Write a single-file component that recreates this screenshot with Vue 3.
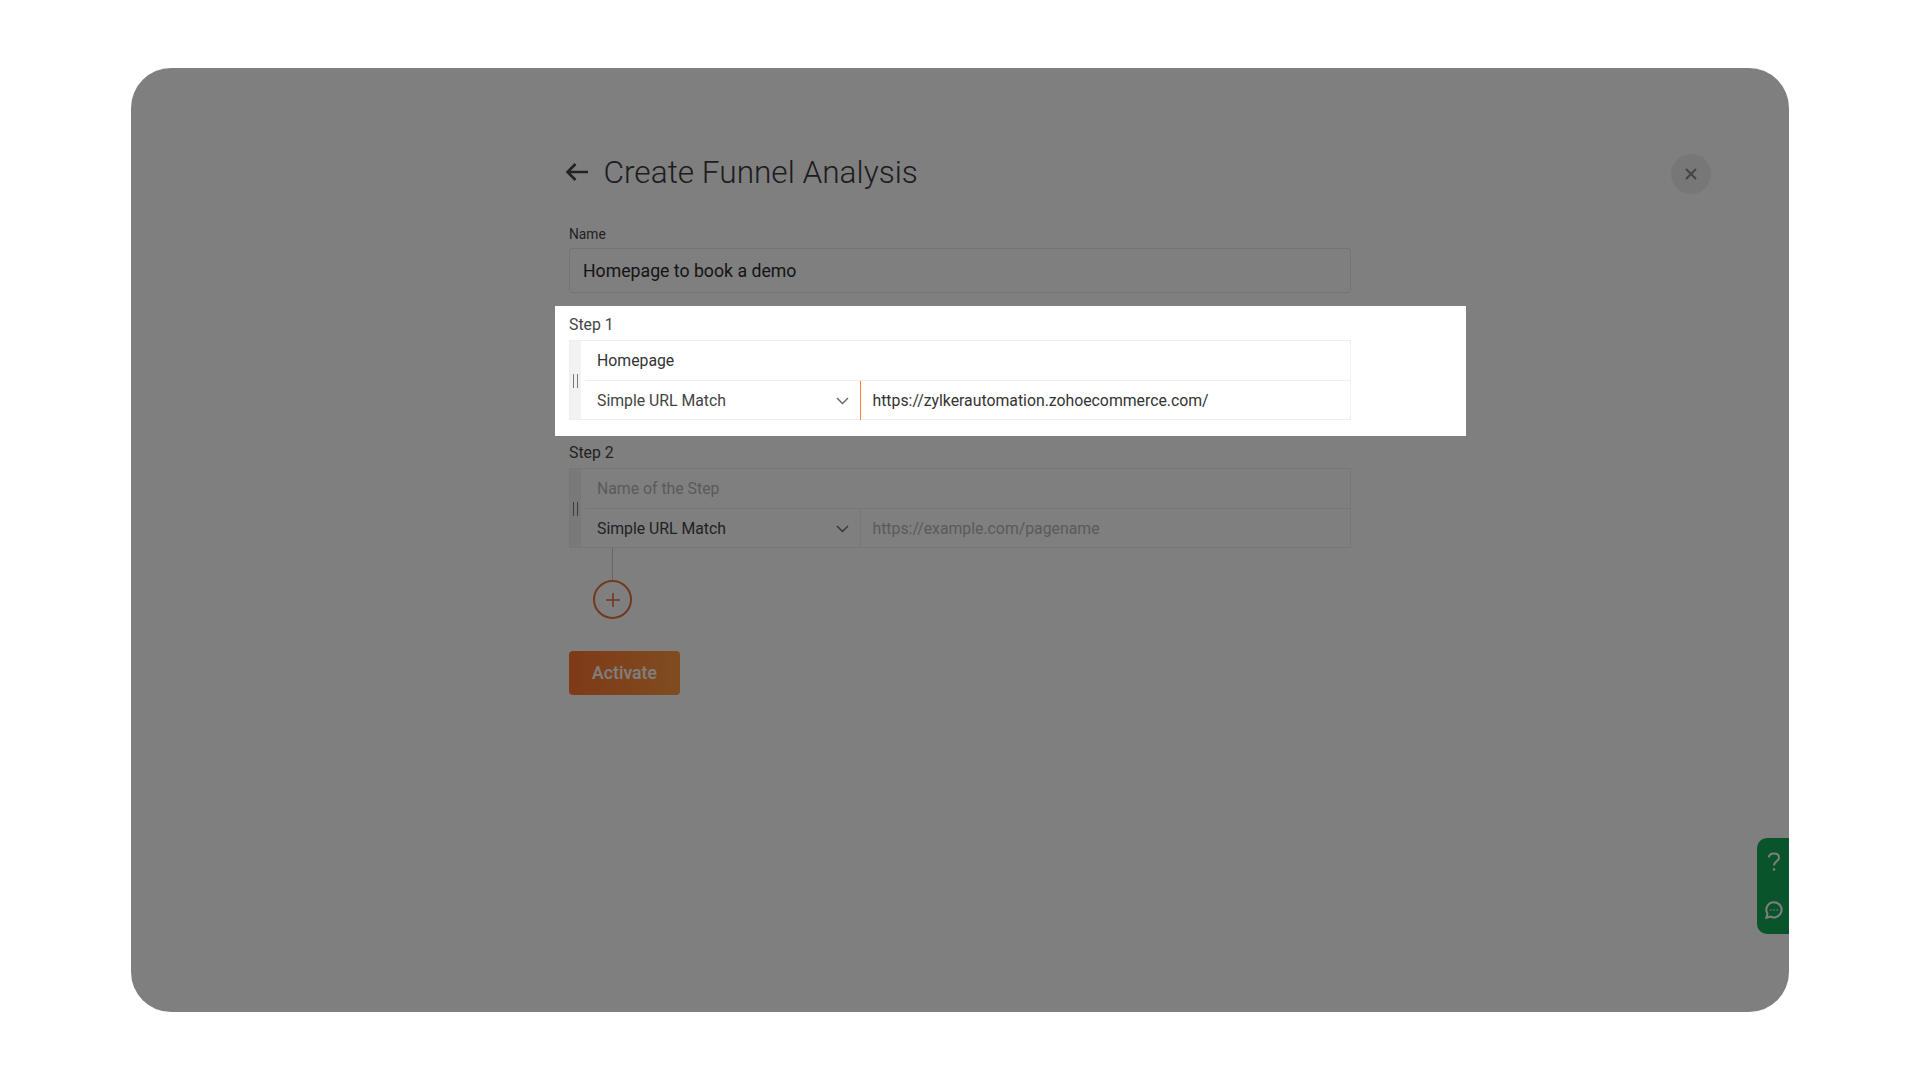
<template>
    <div class="page">
        <div class="panel">
            <button class="close-btn" aria-label="Close">
                <svg width="14" height="14" viewBox="0 0 14 14"><path d="M2 2l10 10M12 2L2 12" /></svg>
            </button>
            <div class="content">
                <div class="header">
                    <svg class="back" width="24" height="20" viewBox="0 0 24 20"><path d="M23 10H3M10.5 2L2.5 10l8 8" /></svg>
                    <h1 class="title">Create Funnel Analysis</h1>
                </div>
                <div class="field-label">Name</div>
                <div class="name-input">Homepage to book a demo</div>

                <div class="step" v-for="step in steps" :key="step.label" :class="{ highlight: step.active }">
                    <div class="step-label">{{ step.label }}</div>
                    <div class="step-box">
                        <div class="handle"><i></i><i></i></div>
                        <div class="step-fields">
                            <div class="step-name" :class="{ placeholder: !step.name }">{{ step.name || 'Name of the Step' }}</div>
                            <div class="step-match">
                                <div class="select">
                                    <span>Simple URL Match</span>
                                    <svg width="13" height="8" viewBox="0 0 13 8"><path d="M1 1l5.5 5.5L12 1" /></svg>
                                </div>
                                <div class="url" :class="{ placeholder: !step.url }">{{ step.url || 'https://example.com/pagename' }}</div>
                            </div>
                        </div>
                    </div>
                </div>

                <div class="connector"></div>
                <button class="add-btn" aria-label="Add step">
                    <svg width="16" height="16" viewBox="0 0 16 16"><path d="M8 1v14M1 8h14" /></svg>
                </button>
                <button class="activate">Activate</button>
            </div>
            <div class="help-tab">
                <div class="help-item">
                    <svg width="14" height="20" viewBox="0 0 14 20"><path d="M2 5.5C2 3 4 1.5 7 1.5s5 1.7 5 4.2c0 3.6-5 3.7-5 7.8" /><circle class="dot" cx="7" cy="17.5" r="1.3" /></svg>
                </div>
                <div class="help-item">
                    <svg width="18" height="18" viewBox="0 0 18 18"><path d="M9 1.2a7.6 7.6 0 1 1-3.4 14.4L1.3 16.8l1.2-4A7.6 7.6 0 0 1 9 1.2z" /><circle class="dot" cx="5.8" cy="9" r=".8" /><circle class="dot" cx="9" cy="9" r=".8" /><circle class="dot" cx="12.2" cy="9" r=".8" /></svg>
                </div>
            </div>
        </div>
    </div>
</template>
<script setup>
    const steps = [
        { label: 'Step 1', name: 'Homepage', url: 'https://zylkerautomation.zohoecommerce.com/', active: true },
        { label: 'Step 2', name: '', url: '', active: false }
    ];
</script>
<style scoped>
    .page {
        height: 1080px;
        box-sizing: border-box;
        padding: 68px 131px;
        background: #fff;
        font-family: Roboto, "Liberation Sans", sans-serif;
        color: #333;
    }
    .panel {
        position: relative;
        height: 944px;
        background: #fff;
        border-radius: 40px;
        overflow: hidden;
    }
    .content {
        width: 782px;
        margin-left: 438px;
        padding-top: 84px;
    }
    .header {
        display: flex;
        align-items: center;
        height: 40px;
        margin-left: -4px;
    }
    .back {
        margin-right: 14.5px;
    }
    .back path {
        fill: none;
        stroke: #444;
        stroke-width: 2.6;
    }
    .title {
        margin: 0;
        padding-top: 1px;
        font-size: 31.6px;
        font-weight: 300;
        color: #3a3a3a;
    }
    .field-label {
        margin-top: 34px;
        height: 16px;
        line-height: 16px;
        font-size: 13.8px;
        color: #444;
    }
    .name-input {
        margin-top: 6px;
        height: 45px;
        box-sizing: border-box;
        padding-left: 13px;
        line-height: 44px;
        font-size: 17.7px;
        color: #2a2a2a;
        background: #fff;
        border: 1px solid #e8e8e8;
        border-radius: 3px;
    }
    .step {
        padding: 8px 0 0;
    }
    .step.highlight {
        position: relative;
        z-index: 1;
        width: 911px;
        box-sizing: border-box;
        margin: 13px 0 0 -14px;
        padding: 10px 115px 16px 14px;
        background: #fff;
        box-shadow: 0 0 0 2000px rgba(0, 0, 0, 0.5);
    }
    .step-label {
        height: 18px;
        line-height: 17px;
        margin-bottom: 6px;
        font-size: 15.8px;
        color: #444;
    }
    .step-box {
        display: flex;
        height: 80px;
        box-sizing: border-box;
        border: 1px solid #eee;
    }
    .handle {
        display: flex;
        justify-content: center;
        align-items: center;
        gap: 3px;
        width: 11px;
        padding: 2px 1px 0 0;
        box-sizing: border-box;
        background: #f2f2f2;
    }
    .handle i {
        width: 1px;
        height: 14px;
        background: #777;
    }
    .step-fields {
        flex: 1;
        display: flex;
        flex-direction: column;
        font-size: 15.8px;
    }
    .step-name {
        height: 39px;
        line-height: 40px;
        padding-left: 16px;
        color: #333;
    }
    .step-match {
        flex: 1;
        display: flex;
        margin-left: 4px;
        border-top: 1px solid #eee;
    }
    .select {
        display: flex;
        align-items: center;
        justify-content: space-between;
        width: 275px;
        box-sizing: border-box;
        padding: 0 11px 0 12px;
        color: #444;
    }
    .select svg path {
        fill: none;
        stroke: #666;
        stroke-width: 1.4;
    }
    .url {
        flex: 1;
        padding-left: 11.5px;
        line-height: 39px;
        border-left: 1px solid #eee;
        color: #333;
    }
    .highlight .url {
        border-left-color: #ff7d36;
    }
    .placeholder {
        color: #b5b5b5;
    }
    .connector {
        width: 1px;
        height: 32px;
        margin-left: 43px;
        background: #ccc;
    }
    .add-btn {
        display: flex;
        align-items: center;
        justify-content: center;
        width: 39px;
        height: 39px;
        padding: 0;
        margin-left: 24px;
        background: #fff;
        border: 2px solid #e8703a;
        border-radius: 50%;
    }
    .add-btn path {
        fill: none;
        stroke: #e8703a;
        stroke-width: 1.6;
    }
    .activate {
        display: block;
        width: 111px;
        height: 44px;
        margin-top: 32px;
        padding: 0;
        border: 0;
        border-radius: 4px;
        background: linear-gradient(90deg, #ff7430, #ff8a3a 60%, #ff9a40);
        color: #fff;
        font-family: inherit;
        font-size: 17.7px;
        font-weight: 500;
    }
    .close-btn {
        position: absolute;
        top: 86px;
        left: 1540px;
        display: flex;
        align-items: center;
        justify-content: center;
        width: 40px;
        height: 40px;
        padding: 0;
        border: 0;
        border-radius: 50%;
        background: #eee;
    }
    .close-btn path {
        fill: none;
        stroke: #888;
        stroke-width: 2;
    }
    .help-tab {
        position: absolute;
        right: 0;
        top: 770px;
        width: 32px;
        height: 96px;
        border-radius: 10px 0 0 10px;
        background: #12a855;
    }
    .help-item {
        display: flex;
        align-items: center;
        justify-content: center;
        padding-left: 1px;
        height: 47px;
    }
    .help-item + .help-item {
        border-top: 1px solid #1fa55c;
        height: 48px;
    }
    .help-item path {
        fill: none;
        stroke: #fff;
        stroke-width: 2;
    }
    .help-item .dot {
        fill: #fff;
    }
</style>
<style>
    body { background: #fff; }
</style>
